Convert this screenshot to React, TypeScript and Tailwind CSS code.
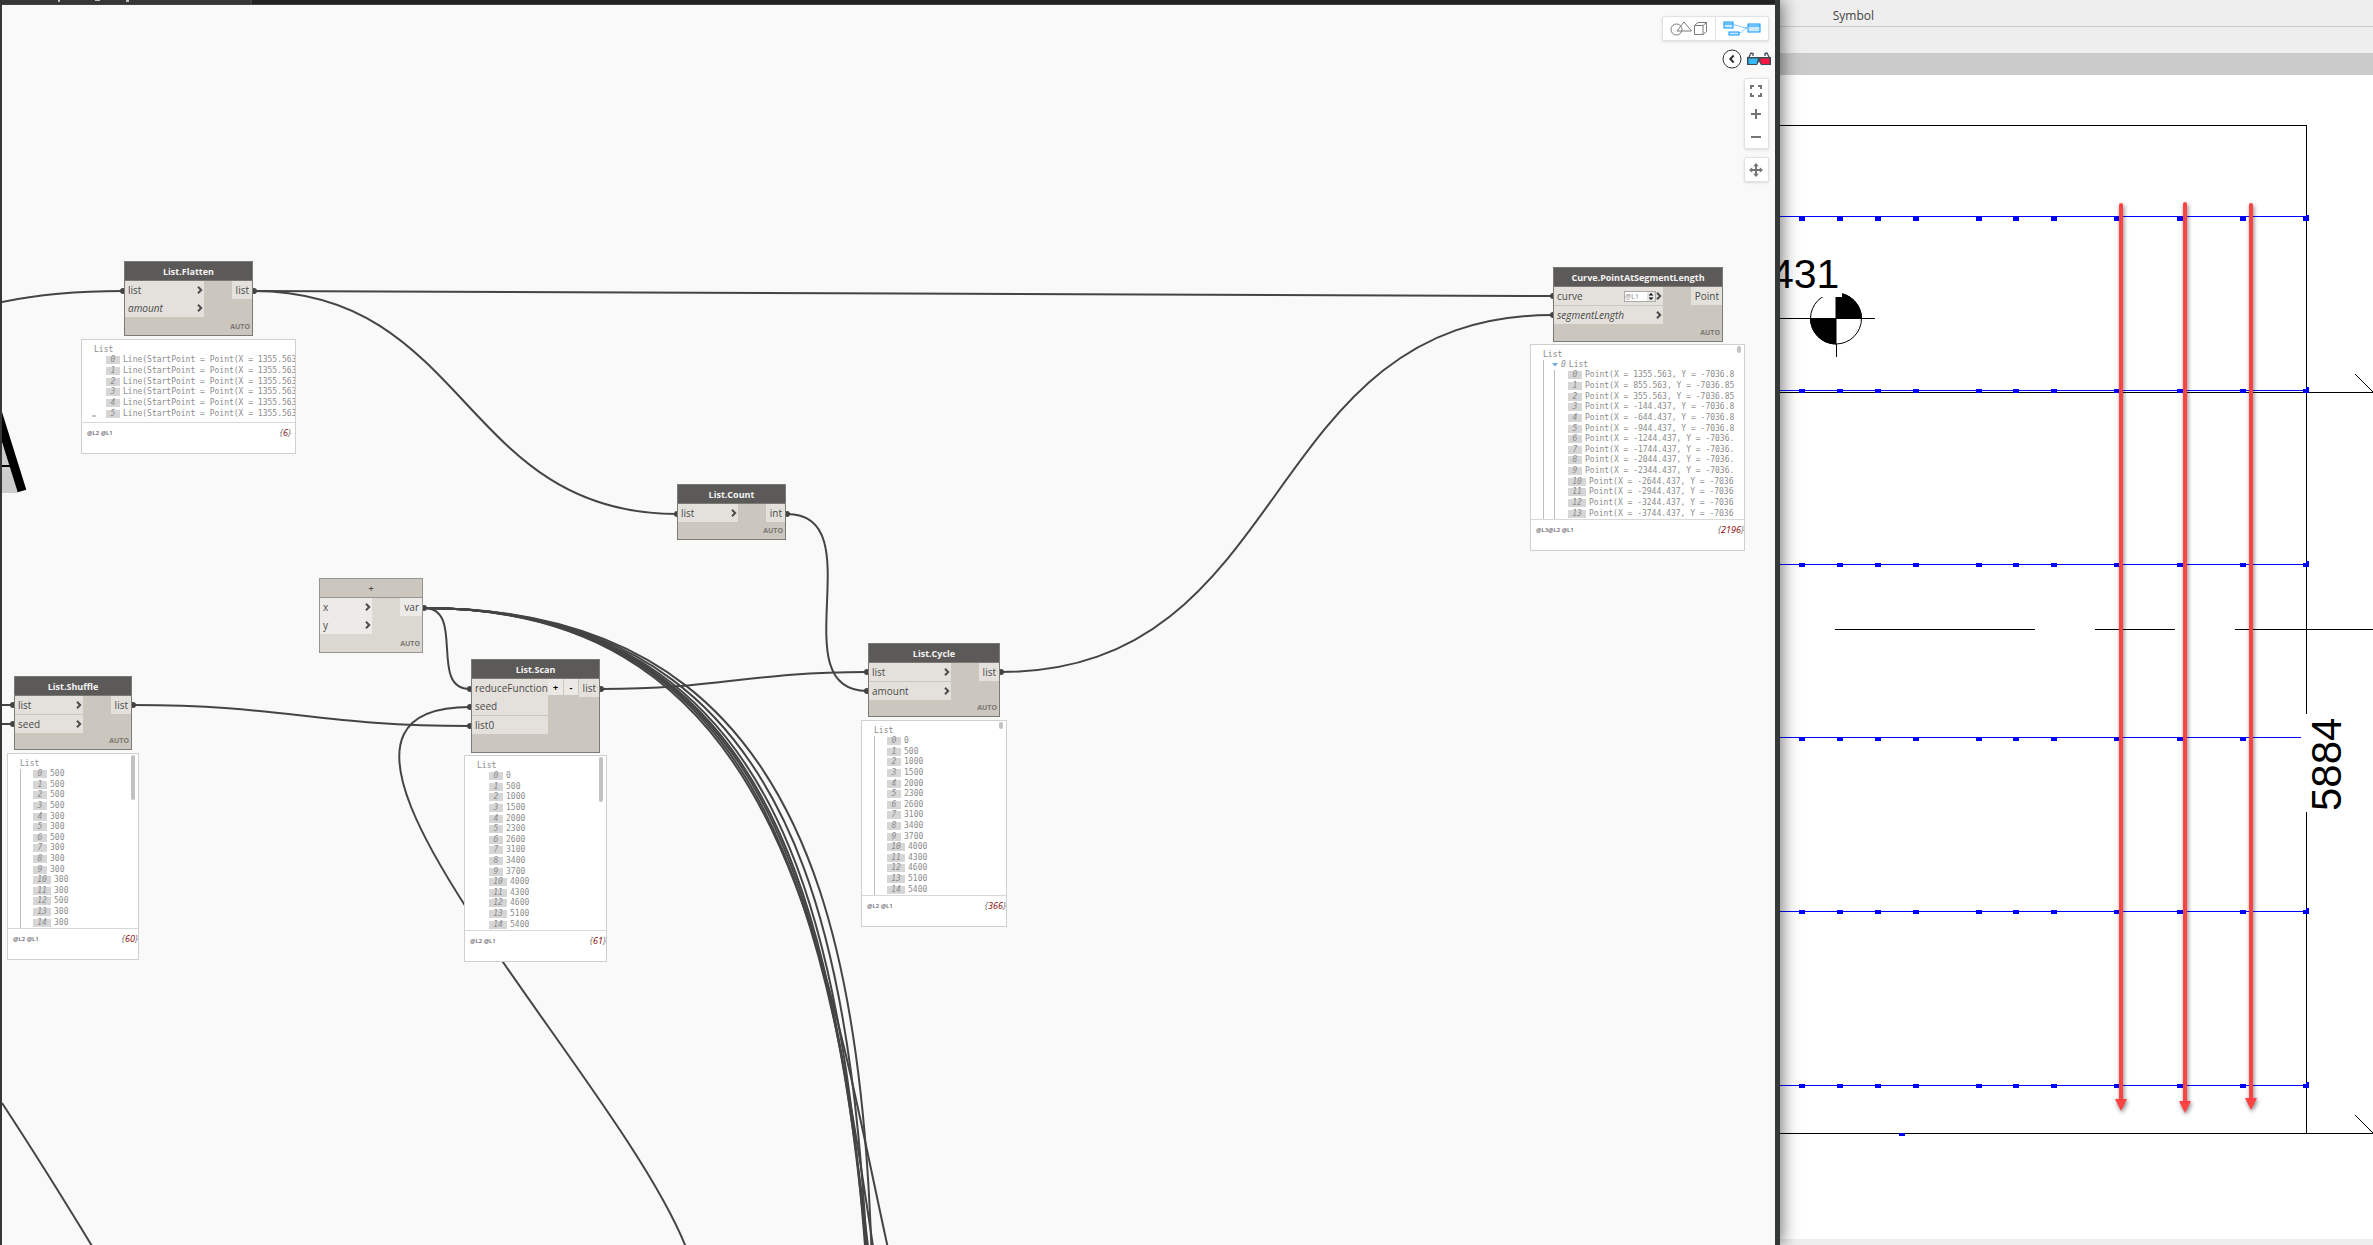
import type { ReactNode } from "react";
import clsx from "clsx";

type Port = { label: string; italic?: boolean; arrow?: boolean; level?: boolean };

type Preview = {
  box: string;
  items: string[];
  total: string;
  levels: string;
  nested?: boolean;
  guide?: boolean;
  thumb?: string;
  dot?: boolean;
};

type NodeData = {
  title: string;
  box: string;
  inputWidth: string;
  inputs: Port[];
  output: string;
  light?: boolean;
  stepper?: boolean;
  divided?: boolean;
};

const CYCLE_VALUES = [
  "0", "500", "1000", "1500", "2000", "2300", "2600", "3100",
  "3400", "3700", "4000", "4300", "4600", "5100", "5400",
];

const NODES: NodeData[] = [
  {
    title: "List.Flatten",
    box: "left-[122px] top-[256px] w-[129px] h-[75px]",
    inputWidth: "w-[79px]",
    inputs: [
      { label: "list", arrow: true },
      { label: "amount", italic: true, arrow: true },
    ],
    output: "list",
  },
  {
    title: "List.Shuffle",
    box: "left-[12px] top-[671px] w-[118px] h-[74px]",
    inputWidth: "w-[68px]",
    inputs: [
      { label: "list", arrow: true },
      { label: "seed", arrow: true },
    ],
    output: "list",
    divided: true,
  },
  {
    title: "+",
    box: "left-[317px] top-[573px] w-[104px] h-[75px]",
    inputWidth: "w-[52px]",
    inputs: [
      { label: "x", arrow: true },
      { label: "y", arrow: true },
    ],
    output: "var",
    light: true,
  },
  {
    title: "List.Scan",
    box: "left-[469px] top-[654px] w-[129px] h-[94px]",
    inputWidth: "w-[76px]",
    inputs: [{ label: "reduceFunction" }, { label: "seed" }, { label: "list0" }],
    output: "list",
    stepper: true,
    divided: true,
  },
  {
    title: "List.Count",
    box: "left-[675px] top-[479px] w-[109px] h-[56px]",
    inputWidth: "w-[60px]",
    inputs: [{ label: "list", arrow: true }],
    output: "int",
  },
  {
    title: "List.Cycle",
    box: "left-[866px] top-[638px] w-[132px] h-[74px]",
    inputWidth: "w-[82px]",
    inputs: [
      { label: "list", arrow: true },
      { label: "amount", arrow: true },
    ],
    output: "list",
    divided: true,
  },
  {
    title: "Curve.PointAtSegmentLength",
    box: "left-[1551px] top-[262px] w-[170px] h-[75px]",
    inputWidth: "w-[109px]",
    inputs: [
      { label: "curve", arrow: true, level: true },
      { label: "segmentLength", italic: true, arrow: true },
    ],
    output: "Point",
    divided: true,
  },
];

const PREVIEWS: Preview[] = [
  {
    box: "left-[79px] top-[334px] w-[215px] h-[115px]",
    items: Array<string>(6).fill("Line(StartPoint = Point(X = 1355.563"),
    total: "6",
    levels: "@L2 @L1",
    dot: true,
  },
  {
    box: "left-[5px] top-[748px] w-[132px] h-[207px]",
    items: [
      "500", "500", "500", "500", "300", "300", "500", "300",
      "300", "300", "300", "300", "500", "300", "300",
    ],
    total: "60",
    levels: "@L2 @L1",
    guide: true,
    thumb: "h-[45px]",
  },
  {
    box: "left-[462px] top-[750px] w-[143px] h-[207px]",
    items: CYCLE_VALUES,
    total: "61",
    levels: "@L2 @L1",
    thumb: "h-[45px]",
  },
  {
    box: "left-[859px] top-[715px] w-[146px] h-[207px]",
    items: CYCLE_VALUES,
    total: "366",
    levels: "@L2 @L1",
    guide: true,
    thumb: "h-[7px]",
  },
  {
    box: "left-[1528px] top-[339px] w-[215px] h-[207px]",
    items: [
      "Point(X = 1355.563, Y = -7036.8",
      "Point(X = 855.563, Y = -7036.85",
      "Point(X = 355.563, Y = -7036.85",
      "Point(X = -144.437, Y = -7036.8",
      "Point(X = -644.437, Y = -7036.8",
      "Point(X = -944.437, Y = -7036.8",
      "Point(X = -1244.437, Y = -7036.",
      "Point(X = -1744.437, Y = -7036.",
      "Point(X = -2044.437, Y = -7036.",
      "Point(X = -2344.437, Y = -7036.",
      "Point(X = -2644.437, Y = -7036",
      "Point(X = -2944.437, Y = -7036",
      "Point(X = -3244.437, Y = -7036",
      "Point(X = -3744.437, Y = -7036",
    ],
    total: "2196",
    levels: "@L3@L2 @L1",
    nested: true,
    guide: true,
    thumb: "h-[7px]",
  },
];

// output x, y, input x, y
const WIRES: number[][] = [
  [251, 286, 675, 509],
  [251, 286, 1551, 291],
  [785, 509, 865, 686],
  [422, 603, 468, 684],
  [599, 684, 865, 667],
  [131, 700, 468, 721],
  [625, 1342, 468, 702],
  [999, 667, 1550, 310],
  ...[1753, 1893, 1983, 2043, 2133, 2263, 2403].map((y) => [422, 603, 1322, y]),
];

const PORTS: number[][] = [
  [121, 286], [252, 286], [11, 700], [11, 719], [131, 700], [422, 603],
  [468, 684], [468, 702], [468, 721], [599, 684], [675, 509], [785, 509],
  [865, 667], [865, 686], [999, 667], [1551, 291], [1551, 310],
];

function wirePath([x0, y0, x1, y1]: number[]) {
  const offset = Math.hypot(x1 - x0, y1 - y0) * 0.45;
  return `M${x0} ${y0} C${x0 + offset} ${y0} ${x1 - offset} ${y1} ${x1} ${y1}`;
}

function Wires() {
  return (
    <svg className="absolute inset-0 h-full w-full" fill="none" aria-hidden="true">
      <path d="M0 438 L16 488 H0 Z" fill="#cdcdcd" />
      <path d="M0 461 H9" stroke="#000" strokeWidth="2" />
      <path d="M-5 406 L20 486" stroke="#000" strokeWidth="9" />
      <g stroke="#444444" strokeWidth="2">
        {WIRES.map((w) => (
          <path key={w.join()} d={wirePath(w)} />
        ))}
        <path d="M0 297 C38 289 83 286 121 286" />
        <path d="M0 700 H11 M0 719 H11" />
        <path d="M0 1098 Q42 1162 90 1241" />
      </g>
      {PORTS.map(([x, y]) => (
        <circle key={`${x}-${y}`} cx={x} cy={y} r="3" fill="#444444" />
      ))}
    </svg>
  );
}

function Chevron() {
  return (
    <svg className="h-2 w-[6px] shrink-0" viewBox="0 0 6 8" fill="none" aria-hidden="true">
      <path d="M1 .7 L4.2 4 L1 7.3" stroke="#4d4d4d" strokeWidth="2" />
    </svg>
  );
}

function GraphNode({ node }: { node: NodeData }) {
  const portBg = node.light ? "bg-[#ecebe8]" : "bg-[#e4e1dc]";
  return (
    <section
      className={clsx(
        "absolute flex flex-col border text-[10px] leading-[18px] text-[#4a4a4a]",
        node.light ? "border-[#979590] bg-[#dbd8d1]" : "border-[#7c7a75] bg-[#cbc6be]",
        node.box,
      )}
    >
      <h2
        className={clsx(
          "h-[19px] shrink-0 border-b text-center text-[9px] leading-[19px]",
          node.light
            ? "border-[#979590] bg-[#cbc6be] font-semibold text-[#4a4a4a]"
            : "border-[#7c7a75] bg-[#5c5a58] font-bold text-[#f4f4f4]",
        )}
      >
        {node.title}
      </h2>
      <div className="flex items-start">
        <ul className={clsx("shrink-0", node.inputWidth)}>
          {node.inputs.map((port, i) => (
            <li
              key={port.label}
              className={clsx(
                "flex items-center justify-between pr-px pl-[3px]",
                portBg,
                node.divided && i === node.inputs.length - 2 && "border-b border-[#cbc6be]",
              )}
            >
              <span className={clsx(port.italic && "italic")}>{port.label}</span>
              <span className="flex items-center">
                {port.level && <LevelInput />}
                {port.arrow && <Chevron />}
              </span>
            </li>
          ))}
        </ul>
        {node.stepper && (
          <div className="flex gap-px text-[9px] leading-[15px] font-bold text-black">
            <button type="button" className="h-4 w-[15px] bg-[#ebe9e6]">+</button>
            <button type="button" className="h-4 w-[14px] bg-[#ebe9e6]">-</button>
          </div>
        )}
        <span className={clsx("ml-auto pr-[3px] pl-1", portBg)}>{node.output}</span>
      </div>
      {!node.stepper && (
        <p className="mt-auto pr-[2px] text-right text-[7px] leading-4 font-bold text-[#7c7872]">AUTO</p>
      )}
    </section>
  );
}

function LevelInput() {
  return (
    <span className="flex h-[11px] w-8 items-center border border-[#a9a9a9] bg-white">
      <input
        aria-label="List level"
        defaultValue="@L1"
        className="h-[9px] w-[22px] text-[7px] leading-[9px] text-[#8a8a8a] outline-none"
      />
      <svg className="h-[9px] w-2 bg-[#e6e6e6]" viewBox="0 0 8 9" aria-hidden="true">
        <path d="M4 1 L6.5 3.6 H1.5 Z M4 8 L6.5 5.4 H1.5 Z" fill="#111" />
      </svg>
    </span>
  );
}

function PreviewBubble({ preview }: { preview: Preview }) {
  return (
    <section className={clsx("absolute flex flex-col border border-[#d0d0d0] bg-white", preview.box)}>
      <div
        className={clsx(
          "relative flex min-h-0 flex-1 flex-col overflow-hidden border-b border-[#d8d8d8] pt-[5px] font-['DejaVu_Sans_Mono','Liberation_Mono',monospace] text-[8px] leading-[10px] text-[#8c8c8c]",
          preview.dot && "pb-[3px]",
        )}
      >
        <p className="pl-3">List</p>
        <div className={clsx("ml-3 flex min-h-0 flex-1 flex-col", preview.guide && "border-l border-[#bdbdbd]")}>
          {preview.nested && (
            <p className="flex items-center gap-[3px] pl-2">
              <svg className="h-1 w-[6px]" viewBox="0 0 6 4" aria-hidden="true">
                <path d="M0 0 H6 L3 3.5 Z" fill="#6fa8d6" />
              </svg>
              <span className="italic">0</span>
              <span>List</span>
            </p>
          )}
          <ol
            className={clsx(
              "flex min-h-0 flex-1 flex-col",
              preview.nested ? "ml-[10px] border-l border-[#bdbdbd] pl-[13px]" : "pl-3",
            )}
          >
            {preview.items.map((item, i) => (
              <li key={i} className="flex min-h-0 flex-1 items-center gap-[3px] whitespace-nowrap">
                <span
                  className={clsx(
                    "h-2 shrink-0 bg-[#d6d6d6] text-center leading-2 italic",
                    i > 9 ? "w-[18px]" : "w-[14px]",
                  )}
                >
                  {i}
                </span>
                <span>{item}</span>
              </li>
            ))}
          </ol>
        </div>
        {preview.thumb && (
          <span className={clsx("absolute top-px right-[3px] w-1 rounded-full bg-[#c2c2c2]", preview.thumb)} />
        )}
        {preview.dot && <span className="absolute bottom-[5px] left-[10px] h-[2px] w-1 rounded-full bg-[#bdbdbd]" />}
      </div>
      <footer className="flex h-[30px] shrink-0 items-start justify-between pt-[3px] pl-[5px]">
        <span className="text-[6px] leading-[14px] font-semibold text-[#5f5f6b]">{preview.levels}</span>
        <span
          className={clsx(
            "text-[9px] leading-[14px] text-[#6f6f6f] italic",
            preview.dot ? "pr-1" : "pr-0",
          )}
        >
          {"{"}
          <span className="text-[#8b0000]">{preview.total}</span>
          {"}"}
        </span>
      </footer>
    </section>
  );
}

function IconButton({ label, children }: { label: string; children: ReactNode }) {
  return (
    <button type="button" aria-label={label} className="flex h-[23px] w-[23px] items-center justify-center">
      {children}
    </button>
  );
}

function ViewControls() {
  const panel = "rounded-xs border border-[#e2e2e2] bg-white shadow-sm";
  return (
    <div className="absolute top-[11px] right-[6px] flex flex-col items-end">
      <div className={clsx("flex", panel)}>
        <button
          type="button"
          aria-label="3D preview"
          className="flex h-[23px] w-[53px] items-center justify-center border-r border-[#e2e2e2]"
        >
          <svg className="h-[15px] w-[38px]" viewBox="0 0 38 15" fill="none" stroke="#7a7a7a" aria-hidden="true">
            <circle cx="6.5" cy="8.5" r="5.5" />
            <path d="M7 10 L14 1 L21.5 10 Z M24.5 4.5 H33 V13.5 H24.5 Z M24.5 4.5 L28 1.5 H36.5 L33 4.5 M36.5 1.5 V10.5 L33 13.5" />
          </svg>
        </button>
        <button type="button" aria-label="Graph view" className="flex h-[23px] w-[52px] items-center justify-center">
          <svg className="h-[15px] w-[38px]" viewBox="0 0 38 15" fill="#cbe9fb" stroke="#0696ff" aria-hidden="true">
            <path d="M10.5 4 C17 4 17 7 24 6.5 M16 12 C20 12 19 8 24 7.5" fill="none" stroke="#7cc3f5" />
            <rect x="1" y="1" width="9" height="6" />
            <path d="M1 3 H10" />
            <rect x="6" y="11" width="10" height="3" />
            <rect x="25" y="3" width="12" height="8" />
            <path d="M25 5 H37" />
          </svg>
        </button>
      </div>
      <div className="-mr-[2px] mt-2 flex items-center gap-[5px]">
        <button type="button" aria-label="Collapse">
          <svg className="h-5 w-5" viewBox="0 0 20 20" fill="none" stroke="#333" aria-hidden="true">
            <circle cx="10" cy="10" r="9" fill="#fff" />
            <path d="M11.7 6.5 L8.3 10 L11.7 13.5" strokeWidth="2" />
          </svg>
        </button>
        <svg className="h-[14px] w-6" viewBox="0 0 24 14" fill="none" aria-hidden="true">
          <path d="M1 7 L4 1 L6 1.5 V4 M23 7 L20 1 L18 1.5 V4" stroke="#3d4b57" strokeWidth="1.3" />
          <path d="M0 5 H24 V13 H14 L12 9.5 L10 13 H0 Z" fill="#3d4b57" />
          <path d="M1.5 6.5 H11 L9.5 12 H1.5 Z" fill="#35b8f5" />
          <path d="M13 6.5 H22.5 V12 H14.5 Z" fill="#ff1744" />
        </svg>
      </div>
      <div className={clsx("mt-[9px] flex flex-col", panel)}>
        <IconButton label="Zoom to fit">
          <svg className="h-3 w-3" viewBox="0 0 12 12" fill="none" stroke="#757575" strokeWidth="2" aria-hidden="true">
            <path d="M1 4 V1 H4 M8 1 H11 V4 M11 8 V11 H8 M4 11 H1 V8" />
          </svg>
        </IconButton>
        <IconButton label="Zoom in">
          <svg className="h-[10px] w-[10px]" viewBox="0 0 10 10" aria-hidden="true">
            <path d="M5 0 V10 M0 5 H10" stroke="#757575" strokeWidth="2" />
          </svg>
        </IconButton>
        <IconButton label="Zoom out">
          <svg className="h-[10px] w-[10px]" viewBox="0 0 10 10" aria-hidden="true">
            <path d="M0 5 H10" stroke="#757575" strokeWidth="2" />
          </svg>
        </IconButton>
      </div>
      <div className={clsx("mt-2", panel)}>
        <IconButton label="Pan">
          <svg className="h-[14px] w-[14px]" viewBox="0 0 14 14" aria-hidden="true">
            <path d="M7 2 V12 M2 7 H12" stroke="#757575" strokeWidth="2" />
            <path d="M7 0 L9.8 3.2 H4.2 Z M7 14 L9.8 10.8 H4.2 Z M0 7 L3.2 4.2 V9.8 Z M14 7 L10.8 4.2 V9.8 Z" fill="#757575" />
          </svg>
        </IconButton>
      </div>
    </div>
  );
}

function GraphWindow() {
  return (
    <main className="relative z-10 flex min-w-0 flex-1 flex-col border-r-[5px] border-l-2 border-[#333738] bg-[#f9f9f9] shadow-[2px_0_16px_rgba(0,0,0,0.55)]">
      <div className="flex h-[5px] shrink-0 border-b border-[#444444] bg-[#222222]">
        <div className="h-full w-[250px] border-r border-[#444444] bg-[#363636]">
          <svg className="h-full w-full" aria-hidden="true">
            <path d="M57 0 V2 M93 0 H98 M124 1 H127" stroke="#b8c4cc" strokeWidth="2" />
          </svg>
        </div>
      </div>
      <div className="relative flex-1 overflow-hidden">
        <Wires />
        {NODES.map((node) => (
          <GraphNode key={node.title} node={node} />
        ))}
        {PREVIEWS.map((preview) => (
          <PreviewBubble key={preview.box} preview={preview} />
        ))}
        <ViewControls />
      </div>
    </main>
  );
}

const MARKS = [22, 60, 98, 136, 199, 236, 274, 337, 400, 463];

const ROWS = [
  { y: 141, mark: 142 },
  { y: 315, mark: 314 },
  { y: 489, mark: 488 },
  { y: 662, mark: 662, open: true },
  { y: 836, mark: 835 },
  { y: 1010, mark: 1009 },
];

const ARROWS = [
  { x: 341, top: 130, tip: 1036 },
  { x: 405, top: 129, tip: 1038 },
  { x: 471, top: 130, tip: 1035 },
];

function Drawing() {
  return (
    <svg
      className="min-h-0 w-full flex-1 bg-white font-['Liberation_Sans',Arial,sans-serif]"
      role="img"
      aria-label="Plan view"
    >
      <g stroke="#000" fill="none" shapeRendering="crispEdges">
        <path d="M0 50.5 H526.5 V639 M526.5 737 V1058" />
        <path d="M0 317.5 H593 M0 1058.5 H593" />
        <path d="M55 554.5 H255 M315 554.5 H395 M455 554.5 H593" />
        <path d="M575 299 L593 317 M575 1040 L593 1058" />
      </g>
      {ROWS.map((row) => (
        <g key={row.y} fill="#0000ff" shapeRendering="crispEdges">
          <rect x="0" y={row.y} width={row.open ? 521 : 526} height="1" />
          {MARKS.map((x) => (
            <rect key={x} x={x - 3} y={row.mark} width="6" height="4" />
          ))}
          {!row.open && <path d={`M523 ${row.mark} h3 v-2 h3 v6 h-6 z`} />}
        </g>
      ))}
      <rect x="119" y="1058" width="6" height="3" fill="#0000ff" />
      <g stroke="#000">
        <circle cx="56" cy="243.5" r="25.5" fill="#fff" />
        <path d="M56 243.5 V218 A25.5 25.5 0 0 1 81.5 243.5 Z M56 243.5 V269 A25.5 25.5 0 0 1 30.5 243.5 Z" />
        <path d="M0 243.5 H95 M56.5 269 V282" shapeRendering="crispEdges" />
      </g>
      <rect x="0" y="178" width="62" height="44" fill="#fff" />
      <text x="-9" y="213" fontSize="41">431</text>
      <text transform="translate(561 736) rotate(-90)" fontSize="42">5884</text>
      <g className="drop-shadow-[1px_2px_2px_rgba(0,0,0,0.5)]">
        {ARROWS.map(({ x, top, tip }) => (
          <g key={x}>
            <path d={`M${x} ${top} V${tip - 11}`} stroke="#ff4343" strokeWidth="4" strokeLinecap="round" />
            <path d={`M${x - 6} ${tip - 12} h12 l-6 12 z`} fill="#ff4343" />
          </g>
        ))}
      </g>
    </svg>
  );
}

function DrawingWindow() {
  return (
    <aside className="flex w-1/4 shrink-0 flex-col bg-[#eeeeee]">
      <div className="flex h-[27px] shrink-0 items-center border-b border-[#cbcbcb] pt-[6px] pl-[53px] text-[12px] leading-4 text-[#444444]">
        Symbol
      </div>
      <div className="h-[26px] shrink-0" />
      <div className="h-[22px] shrink-0 bg-[#cbcbcb]" />
      <Drawing />
      <div className="h-[6px] shrink-0 bg-[#eeeeee]" />
    </aside>
  );
}

export default function App() {
  return (
    <div className="flex h-screen overflow-hidden bg-white font-['Open_Sans','Noto_Sans',sans-serif]">
      <GraphWindow />
      <DrawingWindow />
    </div>
  );
}
